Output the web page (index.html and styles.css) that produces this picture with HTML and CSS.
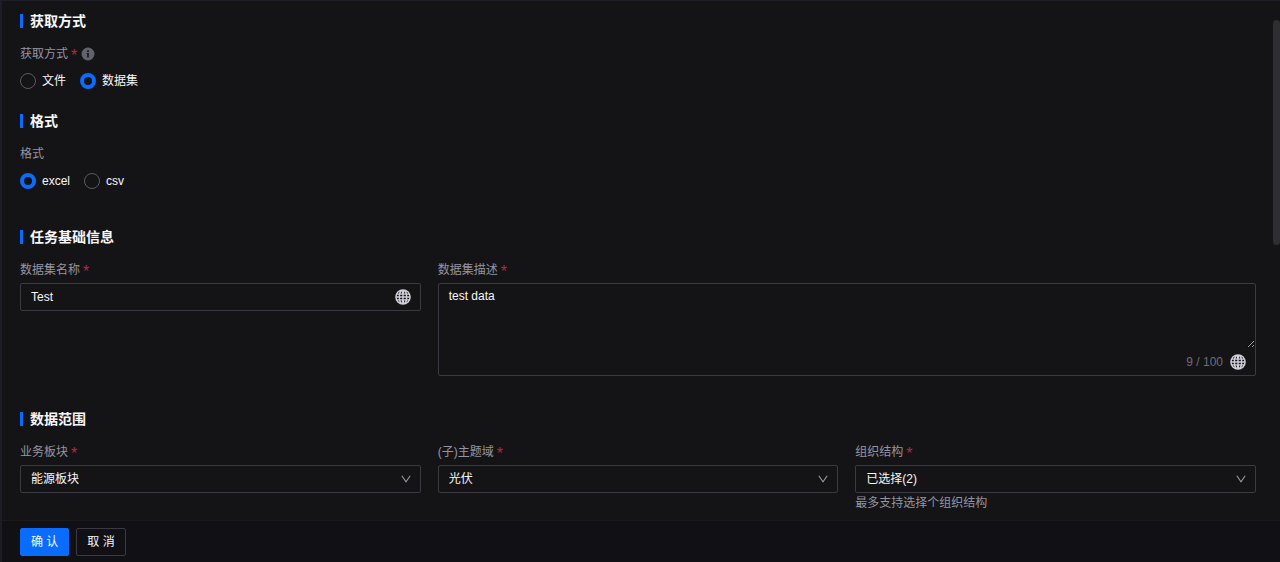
FILE: index.html
```html
<!DOCTYPE html>
<html lang="zh-CN">
<head>
	<meta charset="UTF-8">
	<title>数据集任务</title>
	<link rel="stylesheet" href="styles.css">
</head>
<body>
	<!-- 公用图标 -->
	<svg class="sprite" aria-hidden="true">
		<symbol id="globe" viewBox="0 0 16 16">
			<circle cx="8" cy="8" r="7.8" fill="currentColor" />
			<g fill="#141416">
				<path d="M6.9 2.2v2.3H5.6c.3-1.1.7-1.9 1.3-2.3zM9.1 2.2v2.3h1.3c-.3-1.1-.7-1.9-1.3-2.3z" />
				<path d="M4.6 2.6L3.9 4.5H2.8c.5-.8 1.1-1.4 1.8-1.9zM11.4 2.6l.7 1.9h1.1c-.5-.8-1.1-1.4-1.8-1.9z" />
				<path d="M2.1 5.8h1.7v1.5H1.8zM5.2 5.8h2.1v1.5H5.1zM8.7 5.8h2.1l.1 1.5H8.7zM12.2 5.8h1.7l.3 1.5h-2z" />
				<path d="M1.8 8.7h2v1.5H2.1zM5.1 8.7h2.2v1.5H5.2zM8.7 8.7h2.2l-.1 1.5H8.7zM12.2 8.7h2l-.3 1.5h-1.7z" />
				<path d="M6.9 13.8v-2.3H5.6c.3 1.1.7 1.9 1.3 2.3zM9.1 13.8v-2.3h1.3c-.3 1.1-.7 1.9-1.3 2.3z" />
				<path d="M4.6 13.4l-.7-1.9H2.8c.5.8 1.1 1.4 1.8 1.9zM11.4 13.4l.7-1.9h1.1c-.5.8-1.1 1.4-1.8 1.9z" />
			</g>
		</symbol>
		<symbol id="arrow" viewBox="0 0 10 10">
			<path d="M.8 1.8L5 7.8l4.2-6" fill="none" stroke="currentColor" stroke-width="1.1" />
		</symbol>
	</svg>

	<div class="drawer">
		<form class="page" id="form">
			<div class="scroll">
				<div class="content">
					<section class="section">
						<h2 class="title">获取方式</h2>
						<div class="label" id="way">获取方式<span class="must">*</span>
							<svg class="info" viewBox="0 0 14 14">
								<circle cx="7" cy="7" r="6.5" fill="#62616e" />
								<path d="M6.1 3.2h1.8v1.7H6.1zM5.6 6h2.3v4.6H6.1V7h-.5z" fill="#1b1b20" />
							</svg>
						</div>
						<div class="radios" role="radiogroup" aria-labelledby="way">
							<label class="radio"><input type="radio" name="way" value="file">文件</label>
							<label class="radio"><input type="radio" name="way" value="dataset" checked>数据集</label>
						</div>
					</section>

					<section class="section">
						<h2 class="title">格式</h2>
						<div class="label" id="format">格式</div>
						<div class="radios" role="radiogroup" aria-labelledby="format">
							<label class="radio"><input type="radio" name="format" value="excel" checked>excel</label>
							<label class="radio"><input type="radio" name="format" value="csv">csv</label>
						</div>
					</section>

					<section class="section base">
						<h2 class="title">任务基础信息</h2>
						<div class="grid">
							<div class="item">
								<label class="label" for="name">数据集名称<span class="must">*</span></label>
								<div class="box">
									<input class="text" id="name" type="text" value="Test">
									<svg class="globe"><use href="#globe" /></svg>
								</div>
							</div>
							<div class="item wide">
								<label class="label" for="desc">数据集描述<span class="must">*</span></label>
								<div class="area">
									<textarea class="text" id="desc" maxlength="100">test data</textarea>
									<div class="tools">
										<span class="count">9 / 100</span>
										<svg class="globe"><use href="#globe" /></svg>
									</div>
								</div>
							</div>
						</div>
					</section>

					<section class="section range">
						<h2 class="title">数据范围</h2>
						<div class="grid">
							<div class="item">
								<label class="label" for="plate">业务板块<span class="must">*</span></label>
								<div class="select">
									<select id="plate"><option>能源板块</option></select>
									<svg class="arrow"><use href="#arrow" /></svg>
								</div>
							</div>
							<div class="item">
								<label class="label" for="theme">(子)主题域<span class="must">*</span></label>
								<div class="select">
									<select id="theme"><option>光伏</option></select>
									<svg class="arrow"><use href="#arrow" /></svg>
								</div>
							</div>
							<div class="item">
								<label class="label" for="org">组织结构<span class="must">*</span></label>
								<div class="select">
									<select id="org"><option>已选择(2)</option></select>
									<svg class="arrow"><use href="#arrow" /></svg>
								</div>
								<p class="hint">最多支持选择个组织结构</p>
							</div>
						</div>
					</section>
				</div>
				<div class="rail"><div class="thumb"></div></div>
			</div>
			<div class="footer">
				<button class="btn primary" type="submit">确 认</button>
				<button class="btn" type="button">取 消</button>
			</div>
		</form>
	</div>
</body>
</html>
```
FILE: styles.css
```css
* {
	box-sizing: border-box;
}
html, body {
	height: 100%;
}
body {
	margin: 0;
	background: #141416;
	color: #f8f8fa;
	font: 12px/20px "Liberation Sans", "Noto Sans CJK SC", sans-serif;
}
input, textarea, select, button {
	font: inherit;
	color: inherit;
}
.sprite {
	position: absolute;
	width: 0;
	height: 0;
}
.drawer {
	height: 100%;
	border-left: 2px solid #1d1d26;
	border-top: 1px solid #1d1d26;
}
.page {
	display: flex;
	flex-direction: column;
	height: 100%;
}
.scroll {
	flex: 1;
	min-height: 0;
	display: flex;
	overflow: hidden;
}
.content {
	flex: 1;
	padding: 10px 17px 0 18px;
}
/* 滚动条 */
.rail {
	width: 7px;
	padding-top: 19px;
}
.thumb {
	height: 45%;
	border-radius: 4px;
	background: #2d2d32;
}
.section {
	margin-bottom: 20px;
}
.base {
	margin-top: 36px;
}
.range {
	margin-top: 33px;
}
.title {
	display: flex;
	align-items: center;
	gap: 7px;
	margin: 0 0 13px;
	font-size: 14px;
	line-height: 20px;
	font-weight: bold;
}
.title::before {
	content: "";
	width: 3px;
	height: 14px;
	background: #0a6cff;
}
.label {
	display: flex;
	align-items: center;
	color: #9594a3;
}
.must {
	margin-left: 3px;
	color: #b32846;
	font-size: 16px;
	line-height: 16px;
	padding-top: 4px;
}
.info {
	width: 14px;
	height: 14px;
	margin-left: 4px;
}
.radios {
	display: flex;
	gap: 14px;
	margin-top: 7px;
}
.radio {
	display: flex;
	align-items: center;
	gap: 6px;
}
.radio input {
	appearance: none;
	width: 16px;
	height: 16px;
	margin: 0;
	border: 1px solid #5a5964;
	border-radius: 50%;
}
.radio input:checked {
	border: 4px solid #0a6cff;
}
.grid {
	display: grid;
	grid-template-columns: repeat(3, 1fr);
	column-gap: 17px;
}
.wide {
	grid-column: span 2;
}
.item .label {
	margin-bottom: 3px;
}
.box, .area {
	border: 1px solid #3b3a42;
	border-radius: 2px;
}
.box {
	display: flex;
	align-items: center;
	height: 28px;
	padding-right: 9px;
}
.text {
	flex: 1;
	min-width: 0;
	border: 0;
	outline: 0;
	background: none;
	padding: 0 10px;
}
textarea.text {
	display: block;
	width: 100%;
	height: 64px;
	padding-top: 2px;
	color-scheme: dark;
	resize: vertical;
}
.tools {
	display: flex;
	align-items: center;
	justify-content: flex-end;
	gap: 7px;
	height: 27px;
	padding-right: 9px;
}
.count {
	color: #6d6c79;
}
.globe {
	width: 16px;
	height: 16px;
	color: #d0cfda;
}
.select {
	position: relative;
}
.select select {
	display: block;
	appearance: none;
	width: 100%;
	height: 28px;
	padding: 0 28px 0 10px;
	border: 1px solid #3b3a42;
	border-radius: 2px;
	background: #141416;
}
.arrow {
	position: absolute;
	right: 10px;
	top: 9px;
	width: 10px;
	height: 10px;
	color: #9a99a6;
	pointer-events: none;
}
.hint {
	margin: 0;
	color: #9594a3;
}
.footer {
	display: flex;
	gap: 7px;
	padding: 7px 18px 6px;
	border-top: 1px solid #1b1b1f;
	background: #101015;
}
.btn {
	height: 28px;
	padding: 0 10px;
	border: 1px solid #3b3a42;
	border-radius: 2px;
	background: none;
}
.primary {
	border-color: #0a6cff;
	background: #0a6cff;
}
```
